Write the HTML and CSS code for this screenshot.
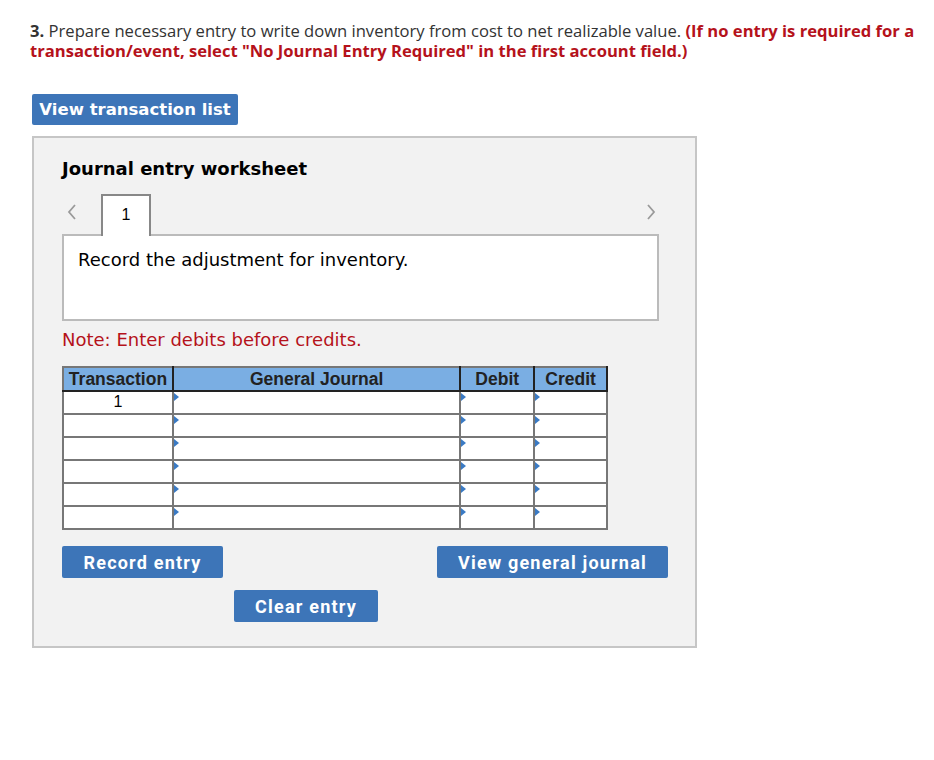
FILE: index.html
```html
<!DOCTYPE html>
<html lang="en">
<head>
  <meta charset="UTF-8">
  <title>Journal entry worksheet</title>
  <link rel="stylesheet" href="styles.css">
</head>
<body>
  <main class="page">
    <p class="question">
      <span class="line"><b>3.</b> Prepare necessary entry to write down inventory from cost to net realizable value. <strong class="hint">(If no entry is required for a</strong></span>
      <span class="line hint">transaction/event, select "No Journal Entry Required" in the first account field.)</span>
    </p>

    <button class="btn btn-list" type="button">View transaction list</button>

    <section class="worksheet">
      <h2>Journal entry worksheet</h2>

      <div class="tabs">
        <span class="nav">
          <svg width="10" height="16" viewBox="0 0 10 16"><path d="M8 1 L2 8 L8 15" fill="none" stroke="#9a9a9a" stroke-width="1.8"/></svg>
        </span>
        <span class="tab">1</span>
        <span class="nav nav-next">
          <svg width="10" height="16" viewBox="0 0 10 16"><path d="M2 1 L8 8 L2 15" fill="none" stroke="#9a9a9a" stroke-width="1.8"/></svg>
        </span>
      </div>
      <div class="instruction">Record the adjustment for inventory.</div>

      <p class="note">Note: Enter debits before credits.</p>

      <table class="journal">
        <thead>
          <tr>
            <th class="col-tx">Transaction</th>
            <th class="col-acct">General Journal</th>
            <th class="col-amt">Debit</th>
            <th class="col-amt">Credit</th>
          </tr>
        </thead>
        <tbody>
          <tr><td class="tx">1</td><td class="pick"></td><td class="pick"></td><td class="pick"></td></tr>
          <tr><td class="tx"></td><td class="pick"></td><td class="pick"></td><td class="pick"></td></tr>
          <tr><td class="tx"></td><td class="pick"></td><td class="pick"></td><td class="pick"></td></tr>
          <tr><td class="tx"></td><td class="pick"></td><td class="pick"></td><td class="pick"></td></tr>
          <tr><td class="tx"></td><td class="pick"></td><td class="pick"></td><td class="pick"></td></tr>
          <tr><td class="tx"></td><td class="pick"></td><td class="pick"></td><td class="pick"></td></tr>
        </tbody>
      </table>

      <div class="actions">
        <button class="btn btn-record" type="button">Record entry</button>
        <button class="btn btn-journal" type="button">View general journal</button>
      </div>
      <div class="actions-second">
        <button class="btn btn-clear" type="button">Clear entry</button>
      </div>
    </section>
  </main>
</body>
</html>
```

FILE: styles.css
```css
:root {
  --text: #333333;
  --red: #b5121b;
  --button: #3d75b8;
  --panel: #f2f2f2;
  --panel-border: #c6c6c6;
  --grid: #777777;
  --head: #7aaee3;
}

* {
  box-sizing: border-box;
}

body {
  margin: 0;
  background: #fff;
  color: var(--text);
}

.page {
  padding: 21px 0 0 30px;
}

.question {
  margin: 0;
  width: 900px;
  font-family: "Open Sans", sans-serif;
  font-size: 16.6px;
  line-height: 20px;
  color: #333;
}

.question .line {
  display: block;
  white-space: nowrap;
}

.question b {
  font-weight: 700;
}

.hint {
  color: var(--red);
  font-weight: 700;
}

.btn {
  display: block;
  border: 0;
  border-radius: 2px;
  background: var(--button);
  color: #fff;
  cursor: pointer;
  padding: 0;
}

.btn-list {
  margin: 33px 0 0 2px;
  width: 206px;
  height: 31px;
  font-family: "DejaVu Sans", Verdana, sans-serif;
  font-weight: 700;
  font-size: 16.5px;
}

.worksheet {
  margin: 11px 0 0 2px;
  width: 665px;
  height: 512px;
  background: var(--panel);
  border: 2px solid var(--panel-border);
  padding: 19px 0 0 28px;
}

.worksheet h2 {
  margin: 0;
  font-family: "DejaVu Sans", Verdana, sans-serif;
  font-size: 18px;
  font-weight: 700;
  color: #000;
  line-height: 24px;
}

.tabs {
  display: flex;
  align-items: flex-end;
  margin-top: 13px;
  width: 597px;
  height: 40px;
}

.nav {
  display: flex;
  align-self: center;
  width: 39px;
  padding-left: 5px;
  margin-top: -4px;
}

.nav-next {
  margin-left: auto;
  width: auto;
  padding: 0 3px 0 0;
}

.tab {
  width: 50px;
  height: 42px;
  margin-bottom: -2px;
  border: 2px solid #888;
  border-bottom: 0;
  background: #fff;
  font-family: "Liberation Sans", Arial, sans-serif;
  font-size: 16px;
  color: #000;
  text-align: center;
  padding-top: 10px;
  position: relative;
  z-index: 1;
}

.instruction {
  width: 597px;
  height: 87px;
  background: #fff;
  border: 2px solid #bbb;
  padding: 13px 0 0 14px;
  font-family: "DejaVu Sans", Verdana, sans-serif;
  font-size: 18px;
  color: #000;
}

.note {
  margin: 7px 0 0;
  font-family: "DejaVu Sans", Verdana, sans-serif;
  font-size: 18px;
  line-height: 24px;
  color: var(--red);
}

.journal {
  margin-top: 14px;
  border-collapse: collapse;
  width: 546px;
  font-family: "Liberation Sans", Arial, sans-serif;
  font-size: 16px;
  background: #fff;
  border: 2px solid var(--grid);
}

.journal th {
  background: var(--head);
  color: #222;
  font-size: 17.5px;
  font-weight: 700;
  height: 24px;
  padding: 0;
  border: 2px solid #222;
  border-top-color: var(--grid);
  line-height: 20px;
}

.journal th:first-child {
  border-left-color: var(--grid);
}

.col-tx { width: 110px; }
.col-acct { width: 289px; }
.col-amt { width: 74px; }
.journal th:last-child { width: 73px; }

.journal td {
  height: 23px;
  padding: 0;
  border: 2px solid var(--grid);
  color: #000;
}

.tx {
  text-align: center;
  vertical-align: top;
  line-height: 20px;
}

.pick {
  position: relative;
}

.pick::before {
  content: "";
  position: absolute;
  top: 1px;
  left: 0;
  border-left: 5px solid #3a7ac4;
  border-top: 4px solid transparent;
  border-bottom: 4px solid transparent;
}

.actions {
  display: flex;
  justify-content: space-between;
  width: 606px;
  margin-top: 16px;
}

.btn-record,
.btn-journal,
.btn-clear {
  height: 32px;
  font-family: Roboto, sans-serif;
  font-weight: 700;
  font-size: 18px;
  letter-spacing: 1.2px;
}

.btn-record { width: 161px; }
.btn-journal { width: 231px; }

.actions-second {
  margin: 12px 0 0 172px;
}

.btn-clear { width: 144px; }
```
